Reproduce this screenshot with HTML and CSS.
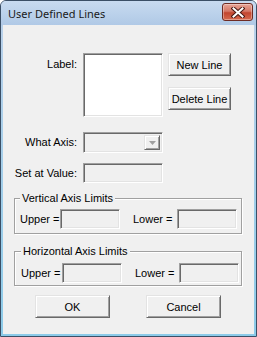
FILE: index.html
```html
<!DOCTYPE html>
<html lang="en">
<head>
    <meta charset="UTF-8">
    <title>User Defined Lines</title>
    <link rel="stylesheet" href="styles.css">
</head>
<body>
    <div class="window">
        <div class="titlebar">
            <span class="title">User Defined Lines</span>
            <div class="close">
                <svg width="14" height="11" viewBox="0 0 14 11">
                    <path d="M2.5 1.5 L11.5 9.5 M11.5 1.5 L2.5 9.5" stroke="#4a1a14" stroke-width="4" stroke-linecap="square"/>
                    <path d="M2.5 1.5 L11.5 9.5 M11.5 1.5 L2.5 9.5" stroke="#ffffff" stroke-width="2" stroke-linecap="square"/>
                </svg>
            </div>
        </div>

        <div class="client">
            <!-- label + list of lines -->
            <div class="row row-top">
                <span class="lbl lbl-top">Label:</span>
                <div class="field listbox"></div>
                <div class="side-buttons">
                    <div class="btn btn-side">New Line</div>
                    <div class="btn btn-side btn-gap">Delete Line</div>
                </div>
            </div>

            <div class="row row-axis">
                <span class="lbl">What Axis:</span>
                <div class="field combo">
                    <div class="combo-arrow">
                        <svg width="7" height="4" viewBox="0 0 7 4"><path d="M0 0 H7 L3.5 4 Z" fill="#a0a0a0"/></svg>
                    </div>
                </div>
            </div>

            <div class="row row-value">
                <span class="lbl">Set at Value:</span>
                <div class="field textbox"></div>
            </div>

            <fieldset class="group group-vert">
                <legend>Vertical Axis Limits</legend>
                <div class="limits">
                    <span class="upper">Upper =</span>
                    <div class="field small"></div>
                    <span class="lower">Lower =</span>
                    <div class="field small"></div>
                </div>
            </fieldset>

            <fieldset class="group group-horiz">
                <legend>Horizontal Axis Limits</legend>
                <div class="limits">
                    <span class="upper">Upper =</span>
                    <div class="field small"></div>
                    <span class="lower">Lower =</span>
                    <div class="field small"></div>
                </div>
            </fieldset>

            <div class="actions">
                <div class="btn btn-wide">OK</div>
                <div class="btn btn-wide">Cancel</div>
            </div>
        </div>
    </div>
</body>
</html>
```

FILE: styles.css
```css
body {
    margin: 0;
    padding: 0;
    background-color: #ffffff;
    font-family: "Liberation Sans", Arial, sans-serif;
    font-size: 11px;
    color: #000000;
}
.window {
    width: 257px;
    height: 337px;
    box-sizing: border-box;
    border: 1px solid #3b4f66;
    border-radius: 6px 6px 0 0;
    background: linear-gradient(to bottom, #c3d7ee 0px, #b4cce8 24px, #b9d1ea 25px, #8ccbe9 100%);
    overflow: hidden;
}
.titlebar {
    height: 24px;
    display: flex;
    align-items: center;
    justify-content: space-between;
    padding: 0 3px 0 7px;
    background: linear-gradient(to bottom, #c8dbf0, #b0c9e6);
}
.title {
    font-family: "Noto Sans", "Open Sans", sans-serif;
    font-size: 11px;
    color: #1a1a1a;
    margin-top: 1px;
}
.close {
    width: 29px;
    height: 16px;
    margin-top: -2px;
    display: flex;
    align-items: center;
    justify-content: center;
    border: 1px solid #6e2b23;
    border-radius: 3px;
    background: linear-gradient(to bottom, #e8a597 0%, #d57766 45%, #c2452f 55%, #d66a4f 100%);
    box-shadow: inset 0 0 0 1px rgba(255, 255, 255, 0.35);
}
.client {
    margin: 0 2px;
    height: 309px;
    background-color: #f0f0f0;
    overflow: hidden;
}
.row {
    display: flex;
    align-items: center;
}
.row-top {
    margin-top: 28px;
    align-items: flex-start;
}
.row-axis {
    margin-top: 15px;
}
.row-value {
    margin-top: 10px;
}
.lbl {
    width: 80px;
    padding-right: 6px;
    box-sizing: border-box;
    text-align: right;
    line-height: 13px;
}
.lbl-top {
    padding-top: 5px;
}
.field {
    box-sizing: border-box;
    border: 1px solid;
    border-color: #a0a0a0 #ffffff #ffffff #a0a0a0;
    box-shadow: inset 1px 1px 0 #696969, inset -1px -1px 0 #e3e3e3;
    background-color: #f0f0f0;
}
.listbox {
    width: 80px;
    height: 64px;
    background-color: #ffffff;
}
.textbox {
    width: 80px;
    height: 20px;
}
.combo {
    width: 80px;
    height: 21px;
    display: flex;
    justify-content: flex-end;
    padding: 2px;
}
.combo-arrow {
    width: 16px;
    height: 15px;
    display: flex;
    align-items: center;
    justify-content: center;
    box-sizing: border-box;
    border: 1px solid;
    border-color: #e3e3e3 #696969 #696969 #e3e3e3;
    box-shadow: inset 1px 1px 0 #ffffff, inset -1px -1px 0 #a0a0a0;
}
.side-buttons {
    margin-left: 5px;
    display: flex;
    flex-direction: column;
}
.btn {
    box-sizing: border-box;
    display: flex;
    align-items: center;
    justify-content: center;
    border: 1px solid;
    border-color: #e3e3e3 #696969 #696969 #e3e3e3;
    box-shadow: inset 1px 1px 0 #ffffff, inset -1px -1px 0 #a0a0a0;
    background-color: #f0f0f0;
    white-space: nowrap;
}
.btn-side {
    width: 63px;
    height: 23px;
}
.btn-gap {
    margin-top: 11px;
}
.group {
    box-sizing: border-box;
    width: 228px;
    margin: 9px 0 0 11px;
    border: 1px solid #a0a0a0;
    box-shadow: inset 1px 1px 0 #ffffff, 1px 1px 0 #ffffff;
    padding: 4px 0 4px 5px;
}
.group legend {
    padding: 0 2px;
    margin-left: 0;
    line-height: 13px;
    background-color: #f0f0f0;
}
.group-horiz {
    margin-top: 11px;
    padding: 5px 0 2px 6px;
}
.limits {
    display: flex;
    align-items: center;
}
.upper {
    width: 40px;
}
.lower {
    width: 44px;
    margin-left: 13px;
}
.group-horiz .upper {
    width: 41px;
}
.small {
    width: 60px;
    height: 20px;
}
.actions {
    display: flex;
    gap: 36px;
    margin: 9px 0 0 32px;
}
.btn-wide {
    width: 75px;
    height: 23px;
}
```
